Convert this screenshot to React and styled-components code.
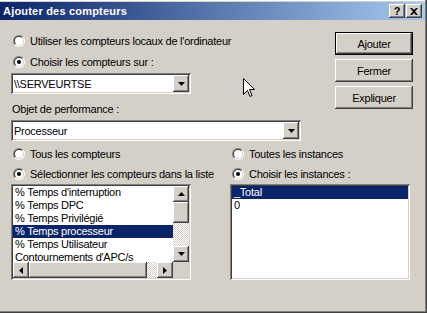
import React from 'react';
import styled, { createGlobalStyle, css } from 'styled-components';

const Global = createGlobalStyle`
  html, body { margin: 0; padding: 0; background: #d4d0c8; }
  body {
    width: 427px; height: 313px; overflow: hidden;
    font-family: "Liberation Sans", Arial, sans-serif;
    font-size: 11px; color: #000;
    letter-spacing: -0.25px;
  }
`;

const raised = css`
  background: #d4d0c8;
  box-shadow: inset -1px -1px #404040, inset 1px 1px #ffffff,
    inset -2px -2px #808080, inset 2px 2px #d4d0c8;
`;
const sunken = css`
  box-shadow: inset 1px 1px #808080, inset -1px -1px #ffffff,
    inset 2px 2px #404040, inset -2px -2px #d4d0c8;
`;
const checker = css`
  background: repeating-conic-gradient(#d4d0c8 0 25%, #ffffff 0 50%) 0 0 / 2px 2px;
`;

const Window = styled.div`
  position: relative;
  width: 427px;
  height: 313px;
  background: #d4d0c8;
  box-sizing: border-box;
  padding-top: 2px;
  box-shadow: inset -1px -1px #404040, inset -2px -2px #808080, inset 0 1px #ffffff;
  display: flex;
  flex-direction: column;
  overflow: hidden;
`;

const TitleBar = styled.div`
  height: 18px;
  margin-right: 2px;
  background: linear-gradient(90deg, #0a246a 0%, #a6caf0 100%);
  display: flex;
  align-items: center;
  padding: 0 3px 0 3px;
`;

const TitleText = styled.div`
  flex: 1;
  color: #fff;
  font-weight: bold;
  font-size: 11px;
  letter-spacing: 0.2px;
`;

const TitleBtn = styled.div`
  ${raised};
  width: 16px;
  height: 14px;
  margin-left: ${p => p.$gap || 0}px;
  display: flex;
  align-items: center;
  justify-content: center;
  font-weight: bold;
  font-size: 11px;
  letter-spacing: 0;
  line-height: 1;
`;

const Body = styled.div`
  padding: 12px 14px 0 11px;
  display: flex;
  flex-direction: column;
`;

const Upper = styled.div`
  display: flex;
  justify-content: space-between;
  align-items: flex-start;
`;

const UpperLeft = styled.div`
  width: 290px;
  display: flex;
  flex-direction: column;
`;

const ButtonCol = styled.div`
  width: 78px;
  display: flex;
  flex-direction: column;
  gap: 4px;
`;

const PushButton = styled.div`
  height: 23px;
  display: flex;
  align-items: center;
  justify-content: center;
  ${raised};
  ${p => p.$default && css`
    box-shadow: inset 0 0 0 1px #000, inset -2px -2px #404040, inset 2px 2px #ffffff,
      inset -3px -3px #808080, inset 3px 3px #d4d0c8;
  `}
`;

const Row = styled.div`
  height: 13px;
  margin-top: ${p => p.$mt || 0}px;
  display: flex;
  align-items: center;
  padding-left: ${p => p.$pl || 0}px;
  white-space: nowrap;
`;

const RadioOuter = styled.span`
  position: relative;
  width: 12px;
  height: 12px;
  border-radius: 50%;
  background: linear-gradient(135deg, #808080 50%, #ffffff 50%);
  margin-right: 5px;
  flex: none;
`;
const RadioInner = styled.span`
  position: absolute;
  inset: 1px;
  border-radius: 50%;
  background: linear-gradient(135deg, #404040 50%, #d4d0c8 50%);
`;
const RadioFill = styled.span`
  position: absolute;
  inset: 2px;
  border-radius: 50%;
  background: #fff;
  display: flex;
  align-items: center;
  justify-content: center;
`;
const RadioDot = styled.span`
  width: 4px;
  height: 4px;
  border-radius: 50%;
  background: #000;
`;

const Radio = ({ checked, children, mt, pl = 2 }) => (
  <Row $mt={mt} $pl={pl}>
    <RadioOuter>
      <RadioInner />
      <RadioFill>{checked && <RadioDot />}</RadioFill>
    </RadioOuter>
    <span>{children}</span>
  </Row>
);

const Combo = styled.div`
  width: ${p => p.$w}px;
  height: 21px;
  margin-top: ${p => p.$mt || 0}px;
  box-sizing: border-box;
  padding: 2px;
  background: #fff;
  ${sunken};
  display: flex;
  align-items: stretch;
`;
const ComboText = styled.div`
  flex: 1;
  display: flex;
  align-items: center;
  padding-left: 1px;
`;
const ArrowBtn = styled.div`
  ${raised};
  width: 16px;
  height: ${p => p.$h || 16}px;
  flex: none;
  display: flex;
  align-items: center;
  justify-content: center;
`;

const Arrow = ({ dir }) => {
  const pts = {
    down: '0,0 7,0 3.5,4',
    up: '3.5,0 7,4 0,4',
    left: '4,0 4,7 0,3.5',
    right: '0,0 4,3.5 0,7',
  }[dir];
  const vertical = dir === 'up' || dir === 'down';
  return (
    <svg width={vertical ? 7 : 4} height={vertical ? 4 : 7} viewBox={vertical ? '0 0 7 4' : '0 0 4 7'}>
      <polygon points={pts} fill="#000" />
    </svg>
  );
};

const Label = styled.div`
  height: 13px;
  margin-top: ${p => p.$mt || 0}px;
  display: flex;
  align-items: center;
  padding-left: 1px;
`;

const Lower = styled.div`
  margin-top: 6px;
  display: grid;
  grid-template-columns: 180px 180px;
  column-gap: 39px;
`;

const Col = styled.div`
  display: flex;
  flex-direction: column;
`;

const ListBox = styled.div`
  margin-top: 4px;
  width: 180px;
  height: 96px;
  box-sizing: border-box;
  padding: 2px;
  background: #fff;
  ${sunken};
  display: grid;
  grid-template-columns: ${p => (p.$scroll ? '160px 16px' : '1fr')};
  grid-template-rows: ${p => (p.$scroll ? '76px 16px' : '1fr')};
  overflow: hidden;
`;

const Items = styled.div`
  overflow: hidden;
`;

const Item = styled.div`
  height: 13px;
  line-height: 13px;
  padding-left: 2px;
  white-space: nowrap;
  background: ${p => (p.$sel ? '#0a246a' : 'transparent')};
  color: ${p => (p.$sel ? '#fff' : '#000')};
`;

const VScroll = styled.div`
  display: flex;
  flex-direction: column;
  ${checker};
`;
const HScroll = styled.div`
  display: flex;
  ${checker};
`;
const Thumb = styled.div`
  ${raised};
  width: ${p => p.$w}px;
  height: ${p => p.$h}px;
  flex: none;
`;
const Spacer = styled.div`
  flex: 1;
`;
const Corner = styled.div`
  background: #d4d0c8;
`;

const Cursor = styled.svg`
  position: absolute;
  left: 243px;
  top: 78px;
`;

const counters = [
  "% Temps d'interruption",
  '% Temps DPC',
  '% Temps Privilégié',
  '% Temps processeur',
  '% Temps Utilisateur',
  "Contournements d'APC/s",
];

export default function App() {
  return (
    <>
      <Global />
      <Window>
        <TitleBar>
          <TitleText>Ajouter des compteurs</TitleText>
          <TitleBtn>?</TitleBtn>
          <TitleBtn $gap={1}>
            <svg width="8" height="7" viewBox="0 0 8 7">
              <path d="M0 0h2l2 2 2-2h2L5 3.5 8 7H6L4 5 2 7H0l3-3.5z" fill="#000" />
            </svg>
          </TitleBtn>
        </TitleBar>
        <Body>
          <Upper>
            <UpperLeft>
              <Radio mt={2}>Utiliser les compteurs locaux de l'ordinateur</Radio>
              <Radio mt={8} checked>Choisir les compteurs sur :</Radio>
              <Combo $w={180} $mt={5}>
                <ComboText>\\SERVEURTSE</ComboText>
                <ArrowBtn $h={17}><Arrow dir="down" /></ArrowBtn>
              </Combo>
              <Label $mt={8}>Objet de performance :</Label>
              <Combo $w={290} $mt={5}>
                <ComboText>Processeur</ComboText>
                <ArrowBtn $h={17}><Arrow dir="down" /></ArrowBtn>
              </Combo>
            </UpperLeft>
            <ButtonCol>
              <PushButton $default>Ajouter</PushButton>
              <PushButton>Fermer</PushButton>
              <PushButton>Expliquer</PushButton>
            </ButtonCol>
          </Upper>
          <Lower>
            <Col>
              <Radio>Tous les compteurs</Radio>
              <Radio mt={7} checked>Sélectionner les compteurs dans la liste</Radio>
              <ListBox $scroll>
                <Items>
                  {counters.map((c, i) => (
                    <Item key={c} $sel={i === 3}>{c}</Item>
                  ))}
                </Items>
                <VScroll>
                  <ArrowBtn><Arrow dir="up" /></ArrowBtn>
                  <Thumb $w={16} $h={21} />
                  <Spacer />
                  <ArrowBtn><Arrow dir="down" /></ArrowBtn>
                </VScroll>
                <HScroll>
                  <ArrowBtn><Arrow dir="left" /></ArrowBtn>
                  <Thumb $w={118} $h={16} />
                  <Spacer />
                  <ArrowBtn><Arrow dir="right" /></ArrowBtn>
                </HScroll>
                <Corner />
              </ListBox>
            </Col>
            <Col>
              <Radio>Toutes les instances</Radio>
              <Radio mt={7} checked>Choisir les instances :</Radio>
              <ListBox>
                <Items>
                  <Item $sel>_Total</Item>
                  <Item>0</Item>
                </Items>
              </ListBox>
            </Col>
          </Lower>
        </Body>
        <Cursor width="12" height="20" viewBox="0 0 12 20">
          <path d="M0.5 0.5 V16.5 L4.5 12.5 L7 18.5 L9 17.5 L6.5 11.5 H11.5 Z" fill="#fff" stroke="#000" strokeWidth="1" />
        </Cursor>
      </Window>
    </>
  );
}
